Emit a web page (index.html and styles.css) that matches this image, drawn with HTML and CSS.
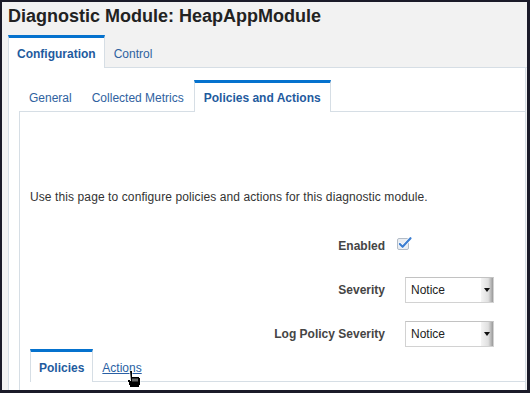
FILE: index.html
```html
<!DOCTYPE html>
<html lang="en">
<head>
    <meta charset="UTF-8">
    <meta name="viewport" content="width=device-width, initial-scale=1.0">
    <title>Diagnostic Module: HeapAppModule</title>
    <link rel="stylesheet" href="styles.css">
</head>
<body>
    <div class="frame">
        <h1 class="title">Diagnostic Module: HeapAppModule</h1>

        <div class="tabs tabs-main">
            <div class="tab active">Configuration</div>
            <div class="tab">Control</div>
        </div>

        <div class="panel">
            <div class="tabs tabs-sub">
                <div class="tab">General</div>
                <div class="tab">Collected Metrics</div>
                <div class="tab active">Policies and Actions</div>
            </div>

            <div class="subpanel">
                <p class="intro">Use this page to configure policies and actions for this diagnostic module.</p>

                <div class="form">
                    <label class="form-label">Enabled</label>
                    <div class="form-field">
                        <span class="checkbox">
                            <svg width="16" height="14" viewBox="0 0 16 14">
                                <rect x="0.5" y="2.5" width="11" height="11" rx="1.5" fill="#e9edf2" stroke="#b3bcc7"/>
                                <path d="M2.8 8 L5.6 10.8 L13.5 2.2" fill="none" stroke="#fff" stroke-width="3.6" stroke-linecap="round" stroke-linejoin="round"/>
                                <path d="M2.8 8 L5.6 10.8 L13.5 2.2" fill="none" stroke="#3d7fd2" stroke-width="2.2" stroke-linecap="round" stroke-linejoin="round"/>
                            </svg>
                        </span>
                    </div>

                    <label class="form-label">Severity</label>
                    <div class="form-field">
                        <div class="select">
                            <span class="select-value">Notice</span>
                            <span class="select-btn"></span>
                        </div>
                    </div>

                    <label class="form-label">Log Policy Severity</label>
                    <div class="form-field">
                        <div class="select">
                            <span class="select-value">Notice</span>
                            <span class="select-btn"></span>
                        </div>
                    </div>
                </div>

                <div class="tabs tabs-inner">
                    <div class="tab active">Policies</div>
                    <div class="tab link">Actions</div>
                    <!-- mouse pointer over the Actions link -->
                    <svg class="cursor" width="18" height="18" viewBox="0 0 18 18">
                        <path d="M4.5 0.5 h3 v5 h1 v1 h6 v1 h1 v8 h-1 v2 h-10 v-2 h-1 v-3 h-1 v-3 h1 v-1 h1 z" fill="#fff"/>
                        <path d="M5 1 h2 v6 h1 v-0 h6 v1 h1 v7 h-1 v2 h-9 v-2 h-1 v-3 h-1 v-2 h2 v1 h1 z" fill="#000"/>
                        <path d="M8 8.5 v3 M10 8.5 v3 M12 8.5 v3" stroke="#fff" stroke-width="0.8"/>
                    </svg>
                </div>
            </div>
        </div>
    </div>
</body>
</html>
```

FILE: styles.css
```css
html, body {
    margin: 0;
    height: 100%;
}
body {
    background-color: #1b1b29;
    padding: 2px 3px 3px 2px;
    box-sizing: border-box;
    font-family: "Liberation Sans", Arial, sans-serif;
    font-size: 12px;
    color: #333;
}
.frame {
    height: 100%;
    background-color: #f2f2f2;
    padding-left: 6px;
    overflow: hidden;
}
.title {
    margin: 4px 0 8px 0;
    font-size: 18px;
    line-height: 21px;
    font-weight: bold;
    color: #222;
}
.tabs {
    display: flex;
    border-bottom: 1px solid #d6dee5;
}
.tab {
    padding: 2px 8px 0 8px;
    line-height: 28px;
    border: 1px solid transparent;
    border-top: 3px solid transparent;
    border-bottom: none;
    margin-bottom: -1px;
    color: #2f62a0;
    white-space: nowrap;
}
.tab.active {
    background-color: #fff;
    border-color: #d6dee5;
    border-top-color: #0572ce;
    color: #1f5b9e;
    font-weight: bold;
}
.panel {
    background-color: #fff;
    border-left: 1px solid #d6dee5;
    border-right: 1px solid #d6dee5;
    margin-right: 1px;
    padding: 12px 0 0 10px;
    height: 100%;
}
.tabs-sub .tab {
    padding: 2px 9px 0 9px;
    line-height: 27px;
}
.subpanel {
    border-left: 1px solid #d6dee5;
    padding: 77px 0 0 10px;
    height: 100%;
}
.intro {
    margin: 0;
    line-height: 16px;
    letter-spacing: 0.1px;
    color: #333;
}
.form {
    display: grid;
    grid-template-columns: 355px auto;
    grid-auto-rows: 26px;
    column-gap: 10px;
    row-gap: 18px;
    margin-top: 28px;
}
.form-label {
    text-align: right;
    font-weight: bold;
    color: #454545;
    line-height: 26px;
}
.form-field {
    display: flex;
    align-items: center;
}
.checkbox {
    display: flex;
    margin: 0 0 6px 2px;
}
.select {
    display: flex;
    width: 89px;
    height: 26px;
    margin-left: 10px;
    box-sizing: border-box;
    border: 1px solid #d2d2d2;
    border-top-color: #c2c2c2;
    background-color: #fff;
}
.select-value {
    flex: 1;
    padding-left: 5px;
    line-height: 24px;
    color: #222;
}
.select-btn {
    position: relative;
    width: 12px;
    background: linear-gradient(to right, #f4f4f4, #e0e0e0 60%, #9a9a9a);
}
.select-btn::after {
    content: "";
    position: absolute;
    left: 3px;
    top: 10px;
    border-left: 3px solid transparent;
    border-right: 3px solid transparent;
    border-top: 4px solid #111;
}
.tabs-inner {
    position: relative;
    margin-top: 2px;
}
.tabs-inner .tab {
    line-height: 28px;
}
.tab.link {
    text-decoration: underline;
    color: #2a5fa4;
}
.cursor {
    position: absolute;
    left: 95px;
    top: 21px;
}
```
